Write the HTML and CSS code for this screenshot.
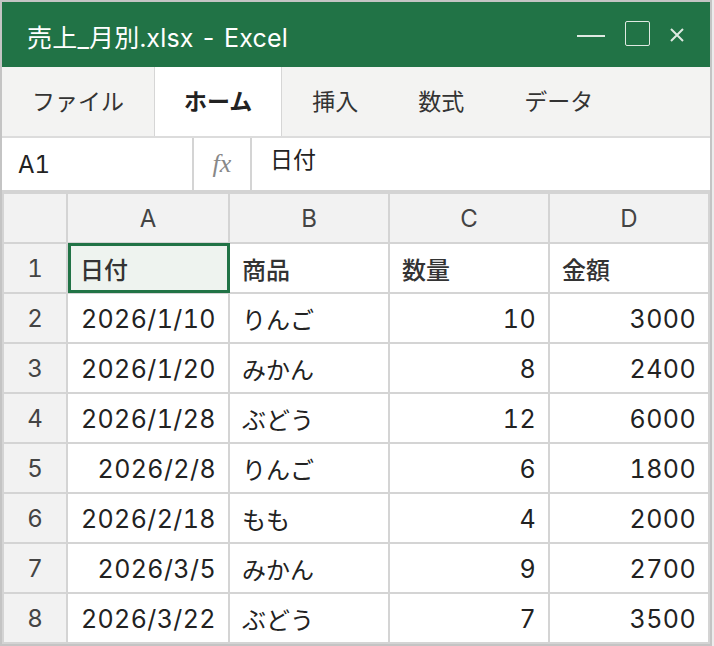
FILE: index.html
```html
<!DOCTYPE html>
<html lang="ja">

<head>
    <meta charset="UTF-8">
    <meta name="viewport" content="width=device-width, initial-scale=1.0">
    <title>売上_月別.xlsx - Excel</title>
    <link rel="stylesheet" href="styles.css">
</head>

<body>
    <div class="window">
        <header class="titlebar">
            <h1>売上_月別.xlsx - Excel</h1>
            <div class="controls">
                <span class="min"></span>
                <span class="max"></span>
                <svg class="close" width="14" height="14" viewBox="0 0 14 14">
                    <path d="M1 1 L13 13 M13 1 L1 13" stroke="#dfe9e2" stroke-width="2" fill="none" />
                </svg>
            </div>
        </header>

        <nav class="tabs">
            <div class="tab">ファイル</div>
            <div class="tab active">ホーム</div>
            <div class="tab">挿入</div>
            <div class="tab">数式</div>
            <div class="tab">データ</div>
        </nav>

        <div class="formula">
            <div class="namebox">A1</div>
            <div class="fx">fx</div>
            <div class="content">日付</div>
        </div>

        <div class="sheet">
            <div class="hd"></div>
            <div class="hd">A</div>
            <div class="hd">B</div>
            <div class="hd">C</div>
            <div class="hd">D</div>

            <div class="hd">1</div>
            <div class="cell head selected">日付</div>
            <div class="cell head">商品</div>
            <div class="cell head">数量</div>
            <div class="cell head">金額</div>

            <div class="hd">2</div>
            <div class="cell num">2026/1/10</div>
            <div class="cell">りんご</div>
            <div class="cell num">10</div>
            <div class="cell num">3000</div>

            <div class="hd">3</div>
            <div class="cell num">2026/1/20</div>
            <div class="cell">みかん</div>
            <div class="cell num">8</div>
            <div class="cell num">2400</div>

            <div class="hd">4</div>
            <div class="cell num">2026/1/28</div>
            <div class="cell">ぶどう</div>
            <div class="cell num">12</div>
            <div class="cell num">6000</div>

            <div class="hd">5</div>
            <div class="cell num">2026/2/8</div>
            <div class="cell">りんご</div>
            <div class="cell num">6</div>
            <div class="cell num">1800</div>

            <div class="hd">6</div>
            <div class="cell num">2026/2/18</div>
            <div class="cell">もも</div>
            <div class="cell num">4</div>
            <div class="cell num">2000</div>

            <div class="hd">7</div>
            <div class="cell num">2026/3/5</div>
            <div class="cell">みかん</div>
            <div class="cell num">9</div>
            <div class="cell num">2700</div>

            <div class="hd">8</div>
            <div class="cell num">2026/3/22</div>
            <div class="cell">ぶどう</div>
            <div class="cell num">7</div>
            <div class="cell num">3500</div>
        </div>
    </div>
</body>

</html>
```

FILE: styles.css
```css
* {
    box-sizing: border-box;
    margin: 0;
    padding: 0;
}

body {
    background-color: #ececec;
    font-family: Inter, "Noto Sans CJK JP", sans-serif;
    font-variant-numeric: tabular-nums;
    color: #222;
}

.window {
    width: 712px;
    height: 646px;
    border: solid 2px #c4c4c4;
    background-color: #fff;
    display: flex;
    flex-direction: column;
}

.titlebar {
    height: 65px;
    background-color: #217346;
    display: flex;
    align-items: center;
    justify-content: space-between;
    padding: 0 26px 0 25px;
}

h1 {
    color: #fff;
    font-size: 25px;
    font-weight: 400;
    letter-spacing: 0.2px;
    padding-top: 2px;
}

.controls {
    display: flex;
    align-items: center;
    gap: 18px;
}

.min {
    width: 28px;
    height: 2px;
    background-color: #dfe9e2;
    margin: 3px 2px 0 0;
}

.max {
    width: 25px;
    height: 25px;
    border: solid 1.5px #dfe9e2;
    border-radius: 2px;
    margin: 0 2px 3px 0;
}

.tabs {
    height: 71px;
    display: flex;
    background-color: #f3f3f2;
    border-bottom: solid 2px #dcdcdc;
}

.tab {
    padding: 2px 30px 0;
    font-size: 23px;
    line-height: 67px;
    color: #333;
}

.tab.active {
    background-color: #fff;
    font-weight: 700;
    border-left: solid 1px #d6d6d6;
    border-right: solid 1px #d6d6d6;
    padding: 2px 29px 0;
    color: #222;
}

.formula {
    height: 54px;
    display: flex;
    border-bottom: solid 2px #d4d4d4;
    font-size: 23px;
}

.namebox {
    width: 192px;
    padding: 12px 16px 0;
    border-right: solid 2px #d4d4d4;
    font-size: 24px;
}

.fx {
    width: 58px;
    border-right: solid 2px #d4d4d4;
    font-family: "Liberation Serif", serif;
    font-style: italic;
    color: #888;
    text-align: center;
    padding-top: 11px;
    font-size: 26px;
}

.content {
    padding: 3px 18px 0;
}

.sheet {
    flex: 1;
    display: grid;
    grid-template-columns: 62px 160px 158px 158px 158px;
    grid-auto-rows: 48px;
    gap: 2px;
    padding: 2px;
    background-color: #d4d4d4;
    font-size: 24px;
}

.hd {
    background-color: #f2f2f2;
    color: #444;
    display: flex;
    align-items: center;
    justify-content: center;
    padding-top: 1px;
}

.cell {
    background-color: #fff;
    display: flex;
    align-items: center;
    padding: 1px 12px 0;
}

.cell.num {
    justify-content: flex-end;
    font-size: 25px;
    letter-spacing: 0.4px;
}

.cell.head {
    font-weight: 500;
    color: #333;
}

.selected {
    position: relative;
    background-color: #eef3ef;
}

.selected::after {
    content: "";
    position: absolute;
    top: -1px;
    left: 0;
    right: -2px;
    bottom: -1px;
    border: solid 3px #217346;
}
```
